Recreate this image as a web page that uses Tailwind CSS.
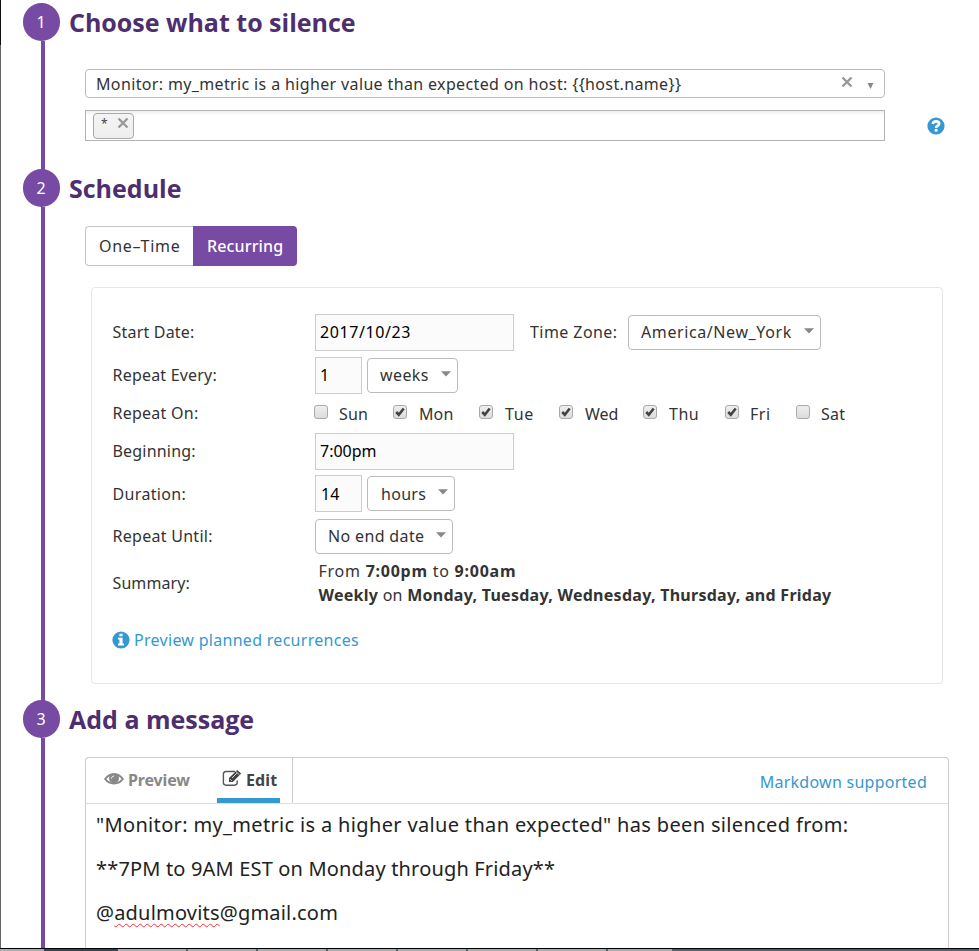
<!DOCTYPE html>
<html lang="en">
<head>
<meta charset="utf-8">
<title>Silence a monitor</title>
<script src="https://cdn.jsdelivr.net/npm/@tailwindcss/browser@4"></script>
</head>
<body class="bg-white">
<svg class="hidden">
  <symbol id="check" viewBox="0 0 14 14"><path d="M2.6 7 5.6 10.2 11.3 3" fill="none" stroke="#424242" stroke-width="3"/></symbol>
  <symbol id="cross" viewBox="0 0 12 12"><path d="M1.5 1.5 10.5 10.5M10.5 1.5 1.5 10.5" fill="none" stroke="#999" stroke-width="2.4"/></symbol>
  <symbol id="caret" viewBox="0 0 10 6"><path d="M0 0.3H10L5 5.6Z" fill="#888"/></symbol>
</svg>
<div class="flex h-[951px] w-[979px] flex-col overflow-hidden font-['Noto_Sans','Open_Sans',sans-serif] text-[16px] leading-6 text-[#333]">
  <div class="flex h-[948px] overflow-hidden">
    <div class="flex w-px shrink-0 flex-col bg-[#666]"><div class="h-[45px] bg-[#111]"></div></div>
    <main class="flex w-[978px] flex-col">

      <section class="flex h-[166px]">
        <div class="ml-[22px] flex w-[37px] shrink-0 flex-col items-center pt-[3px]">
          <div class="flex size-[37.5px] shrink-0 items-center justify-center rounded-full bg-[#774aa4] pr-px text-white">1</div>
          <div class="-mb-[4px] ml-[3px] w-1 grow bg-[#774aa4]"></div>
        </div>
        <div class="flex flex-col">
          <h2 class="ml-[9px] mt-[4px] font-['Open_Sans',sans-serif] text-[25px] font-bold leading-9 text-[#4d2e6e]">Choose what to silence</h2>
          <div class="ml-[25px] mt-[29px] flex h-[29px] w-[800px] items-center rounded-[4px] border border-[#bbb] pl-[10px]">
            <span class="grow tracking-[0.36px]">Monitor: my_metric is a higher value than expected on host: {{host.name}}</span>
            <svg class="mr-[14px] -mt-[3px] size-3"><use href="#cross"/></svg>
            <svg class="mr-[10px] mt-[4px] h-[6px] w-[7px]" viewBox="0 0 7 6"><path d="M0.5 0H6.5L3.5 6Z" fill="#888"/></svg>
          </div>
          <div class="mt-[12px] flex items-center">
            <div class="ml-[25px] flex h-[31px] w-[800px] items-center border border-[#b4b4b4] bg-gradient-to-b from-[#eee] via-white via-15% to-white pl-[7px]">
              <div class="flex h-[26px] w-[41px] items-center rounded-[4px] border border-[#aaa] bg-gradient-to-b from-[#f4f4f4] to-[#eee] pl-[7px]">
                <span class="-mt-1 w-[16px] text-[12px] text-[#444]">*</span>
                <svg class="-mt-[6px] size-3"><use href="#cross"/></svg>
              </div>
            </div>
            <svg class="ml-[42px] size-[18px]" viewBox="0 0 18 18"><circle cx="9" cy="9" r="8.6" fill="#3598d0"/><path d="M5.7 7C6 4.9 7.2 4.3 9 4.3 11 4.3 12.1 5.3 12.1 6.7 12.1 8.9 9.1 8.5 9.1 11" fill="none" stroke="#fff" stroke-width="2.7"/><path d="M7.7 11.9H10.5V14.6H7.7Z" fill="#fff"/></svg>
          </div>
        </div>
      </section>

      <section class="flex h-[532px]">
        <div class="ml-[22px] flex w-[37px] shrink-0 flex-col items-center pt-[3px]">
          <div class="flex size-[37.5px] shrink-0 items-center justify-center rounded-full bg-[#774aa4] pr-px text-white">2</div>
          <div class="-mb-[4px] ml-[3px] w-1 grow bg-[#774aa4]"></div>
        </div>
        <div class="flex flex-col">
          <h2 class="ml-[9px] mt-[4px] font-['Open_Sans',sans-serif] text-[25px] font-bold leading-9 text-[#4d2e6e]">Schedule</h2>
          <div class="ml-[25px] mt-[20px] flex h-[40px]">
            <div class="flex w-[108px] items-center rounded-l-[4px] border border-r-0 border-[#c4c4c4] pl-[13px] tracking-[0.7px]">One–Time</div>
            <div class="flex w-[104px] items-center rounded-r-[4px] bg-[#774aa4] pl-[14px] font-medium tracking-[0.15px] text-white">Recurring</div>
          </div>
          <div class="ml-[31px] mt-[21px] flex h-[397px] w-[852px] flex-col rounded-[4px] border border-[#e6e6e6] pl-[20px] pt-[22px]">
            <div class="flex h-[44px] items-center">
              <span class="w-[203px] pl-[0.5px] tracking-[0.2px]">Start Date:</span>
              <div class="flex h-[37px] w-[199px] items-center border border-[#ccc] bg-[#fbfbfb] pl-[4px] tracking-[0.6px] text-black">2017/10/23</div>
              <span class="ml-[16px] w-[98px] tracking-[0.43px]">Time Zone:</span>
              <div class="flex h-[35px] w-[193px] items-center justify-between rounded-[4px] border border-[#bbb] pl-[12px] pr-[6px] tracking-[0.6px]">America/New_York<svg class="-mt-[3px] h-[6px] w-[10px]"><use href="#caret"/></svg></div>
            </div>
            <div class="flex h-[42px] items-center">
              <span class="w-[203px] pl-[0.5px] tracking-[0.2px]">Repeat Every:</span>
              <div class="flex h-[37px] w-[47px] items-center border border-[#ccc] bg-[#fbfbfb] pl-[4px] text-black">1</div>
              <div class="ml-[5px] flex h-[35px] w-[91px] items-center justify-between rounded-[4px] border border-[#bbb] pl-[12px] pr-[6px] tracking-[0.4px]">weeks<svg class="-mt-[3px] h-[6px] w-[10px]"><use href="#caret"/></svg></div>
            </div>
            <div class="flex h-[34px] items-center">
              <span class="w-[202px] pl-[0.5px] tracking-[0.25px]">Repeat On:</span>
              <div class="flex w-[79px] items-center gap-[11px]"><span class="-mt-[3px] size-[14px] rounded-[3px] border border-[#aaa] bg-gradient-to-b from-[#eee] to-[#dcdcdc]"></span><span class="mt-[1px] tracking-[0.2px]">Sun</span></div>
              <div class="flex w-[86px] items-center gap-[12px]"><span class="-mt-[3px] size-[14px] rounded-[3px] border border-[#aaa] bg-gradient-to-b from-[#eee] to-[#dcdcdc]"><svg class="size-3"><use href="#check"/></svg></span><span class="mt-[1px] tracking-[0.1px]">Mon</span></div>
              <div class="flex w-[80px] items-center gap-[12px]"><span class="-mt-[3px] size-[14px] rounded-[3px] border border-[#aaa] bg-gradient-to-b from-[#eee] to-[#dcdcdc]"><svg class="size-3"><use href="#check"/></svg></span><span class="mt-[1px] tracking-[0.6px]">Tue</span></div>
              <div class="flex w-[84px] items-center gap-[12px]"><span class="-mt-[3px] size-[14px] rounded-[3px] border border-[#aaa] bg-gradient-to-b from-[#eee] to-[#dcdcdc]"><svg class="size-3"><use href="#check"/></svg></span><span class="mt-[1px]">Wed</span></div>
              <div class="flex w-[82px] items-center gap-[12px]"><span class="-mt-[3px] size-[14px] rounded-[3px] border border-[#aaa] bg-gradient-to-b from-[#eee] to-[#dcdcdc]"><svg class="size-3"><use href="#check"/></svg></span><span class="mt-[1px] tracking-[0.5px]">Thu</span></div>
              <div class="flex w-[71px] items-center gap-[11px]"><span class="-mt-[3px] size-[14px] rounded-[3px] border border-[#aaa] bg-gradient-to-b from-[#eee] to-[#dcdcdc]"><svg class="size-3"><use href="#check"/></svg></span><span class="mt-[1px] tracking-[0.5px]">Fri</span></div>
              <div class="flex items-center gap-[11px]"><span class="-mt-[3px] size-[14px] rounded-[3px] border border-[#aaa] bg-gradient-to-b from-[#eee] to-[#dcdcdc]"></span><span class="mt-[1px] tracking-[0.3px]">Sat</span></div>
            </div>
            <div class="flex h-[42px] items-center">
              <span class="w-[203px] pl-[0.5px] tracking-[0.2px]">Beginning:</span>
              <div class="flex h-[37px] w-[199px] items-center border border-[#ccc] bg-[#fbfbfb] pl-[4px] text-black">7:00pm</div>
            </div>
            <div class="flex h-[43px] items-center">
              <span class="w-[203px] pl-[0.5px] tracking-[0.35px]">Duration:</span>
              <div class="flex h-[37px] w-[47px] items-center border border-[#ccc] bg-[#fbfbfb] pl-[5px] text-black">14</div>
              <div class="ml-[5px] flex h-[35px] w-[88px] items-center justify-between rounded-[4px] border border-[#bbb] pl-[13px] pr-[6px] tracking-[0.3px]">hours<svg class="-mt-[3px] h-[6px] w-[10px]"><use href="#caret"/></svg></div>
            </div>
            <div class="flex h-[42px] items-center">
              <span class="w-[203px] pl-[0.5px] tracking-[0.28px]">Repeat Until:</span>
              <div class="flex h-[35px] w-[138px] items-center justify-between rounded-[4px] border border-[#bbb] pl-[12px] pr-[6px] tracking-[0.35px]">No end date<svg class="-mt-[3px] h-[6px] w-[10px]"><use href="#caret"/></svg></div>
            </div>
            <div class="mt-[2px] flex h-[48px] items-center">
              <span class="w-[206px] pl-[0.5px] tracking-[0.1px]">Summary:</span>
              <div class="pl-[0.5px] tracking-[0.27px]"><p class="tracking-[0.75px]">From <b>7:00pm</b> to <b>9:00am</b></p><p><b>Weekly</b> on <b>Monday, Tuesday, Wednesday, Thursday, and Friday</b></p></div>
            </div>
            <div class="mt-[21px] flex items-center gap-[4px] text-[#3598d0]">
              <svg class="size-[18px]" viewBox="0 0 18 18"><circle cx="9" cy="9" r="8.6" fill="#3598d0"/><path d="M7.4 2.8H10.6V5.3H7.4ZM6 6.8H10.6V12.6H12V14.4H6V12.6H7.4V8.6H6Z" fill="#fff"/></svg>
              <span class="tracking-[0.29px]">Preview planned recurrences</span>
            </div>
          </div>
        </div>
      </section>

      <section class="flex h-[250px]">
        <div class="ml-[22px] flex w-[37px] shrink-0 flex-col items-center pt-[2px]">
          <div class="flex size-[37.5px] shrink-0 items-center justify-center rounded-full bg-[#774aa4] pr-px text-white">3</div>
          <div class="ml-[3px] w-1 grow bg-[#774aa4]"></div>
        </div>
        <div class="flex flex-col">
          <h2 class="ml-[9px] mt-[3px] font-['Open_Sans',sans-serif] text-[25px] font-bold leading-9 text-[#4d2e6e]">Add a message</h2>
          <div class="ml-[25px] mt-[20px] flex grow w-[864px] flex-col rounded-t-[4px] border border-b-0 border-[#ccc]">
            <div class="flex h-[46px] shrink-0 items-center border-b border-[#ddd]">
              <div class="flex h-full w-[207px] border-r border-[#ccc] pl-[18px] font-bold">
                <div class="flex w-[113px] items-center gap-[4px] pb-[2px] text-[#888]">
                  <svg class="-mt-[2px] h-[14px] w-[20px]" viewBox="0 0 20 14"><path d="M1.2 7C5.5 .6 14.5 .6 18.8 7 14.5 13 5.5 13 1.2 7Z" fill="none" stroke="#888" stroke-width="2"/><circle cx="10" cy="6.3" r="5" fill="#888"/><path d="M7.6 6.6C7.6 4.9 8.6 4 10.2 4" fill="none" stroke="#fff" stroke-width="1"/></svg>
                  <span class="tracking-[-0.15px]">Preview</span>
                </div>
                <div class="flex w-[63px] items-center gap-[4px] border-b-[5px] border-[#3598d0] pl-[5px] pt-[3px] text-[#444]">
                  <svg class="-mt-[3px] h-[18px] w-[20px]" viewBox="0 0 20 18"><path d="M13 2.5H4Q1.4 2.5 1.4 5.1V13.6Q1.4 16.2 4 16.2H12.5Q15.2 16.2 15.2 13.6V11.5" fill="none" stroke="#555" stroke-width="1.4"/><path d="M7 9 15.2 .9 19.2 4.6 10.8 12.9H7Z" fill="#444"/><path d="M8.2 10.3 9.8 11.9M10 9 14.8 4.2M14 2.6 17.5 6" fill="none" stroke="#fff" stroke-width=".8"/></svg>
                  <span class="tracking-[0.1px]">Edit</span>
                </div>
              </div>
              <span class="ml-auto mr-[21px] mt-[3px] tracking-[0.26px] text-[#3598d0]">Markdown supported</span>
            </div>
            <div class="-mt-px flex flex-col pl-[10px] text-[20px] leading-[44px] text-[#222]">
              <p class="tracking-[0.34px]">"Monitor: my_metric is a higher value than expected" has been silenced from:</p>
              <p class="tracking-[0.17px]">**7PM to 9AM EST on Monday through Friday**</p>
              <p class="tracking-[0.2px]">@<span class="underline decoration-red-500 decoration-wavy decoration-1 underline-offset-[3px]">adulmovits</span>@gmail.com</p>
            </div>
          </div>
        </div>
      </section>
    </main>
  </div>
  <div class="flex h-[3px] border-t border-black bg-[#54606a]">
    <div class="w-[44px] bg-[#a9adaf]"></div><div class="w-[74px] bg-[#34454f]"></div>
    <div class="mr-[2px] w-[68px] bg-[#a9adaf]"></div><div class="mr-[2px] w-[68px] bg-[#a9adaf]"></div><div class="mr-[2px] w-[68px] bg-[#a9adaf]"></div><div class="mr-[2px] w-[68px] bg-[#a9adaf]"></div><div class="mr-[2px] w-[68px] bg-[#a9adaf]"></div><div class="mr-[2px] w-[68px] bg-[#a9adaf]"></div><div class="mr-[2px] w-[68px] bg-[#a9adaf]"></div><div class="w-[64px] bg-[#a9adaf]"></div>
  </div>
</div>
</body>
</html>
